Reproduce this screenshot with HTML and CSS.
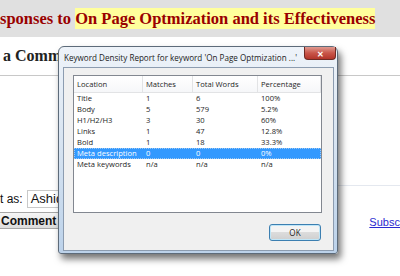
FILE: index.html
```html
<!DOCTYPE html>
<html lang="en">
<head>
    <meta charset="UTF-8">
    <title>Keyword Density Report</title>
    <link rel="stylesheet" href="styles.css">
</head>
<body>

    <div class="band">
        <h2 class="post-title">sponses to <span class="mark">On Page Optmization and its Effectiveness</span></h2>
    </div>

    <div class="comment-head">
        <h3>a Comm</h3>
    </div>

    <div class="rule"></div>

    <div class="comment-as">
        <span>t as:</span>
        <span class="identity">Ashique</span>
    </div>

    <div class="comment-actions">
        <button class="btn-comment">Comment</button>
        <a href="#" class="subscribe">Subscribe</a>
    </div>

    <!-- popup report window, sits over the page -->
    <div class="dialog">
        <div class="titlebar">
            <span class="caption">Keyword Density Report for keyword 'On Page Optmization ...'</span>
            <span class="close">&#x2715;</span>
        </div>
        <div class="client">
            <div class="listview">
                <div class="row head">
                    <span>Location</span><span>Matches</span><span>Total Words</span><span>Percentage</span>
                </div>
                <div class="row"><span>Title</span><span>1</span><span>6</span><span>100%</span></div>
                <div class="row"><span>Body</span><span>5</span><span>579</span><span>5.2%</span></div>
                <div class="row"><span>H1/H2/H3</span><span>3</span><span>30</span><span>60%</span></div>
                <div class="row"><span>Links</span><span>1</span><span>47</span><span>12.8%</span></div>
                <div class="row"><span>Bold</span><span>1</span><span>18</span><span>33.3%</span></div>
                <div class="row selected"><span>Meta description</span><span>0</span><span>0</span><span>0%</span></div>
                <div class="row"><span>Meta keywords</span><span>n/a</span><span>n/a</span><span>n/a</span></div>
            </div>
            <div class="footer">
                <button class="btn-ok">OK</button>
            </div>
        </div>
    </div>

</body>
</html>
```

FILE: styles.css
```css
body {
    margin: 0;
    width: 400px;
    height: 276px;
    overflow: hidden;
    background: #ffffff;
    font-family: "Liberation Sans", Arial, sans-serif;
    position: relative;
}

/* --- Page behind the popup --- */
.band {
    height: 37px;
    background: #e0e0e0;
    display: flex;
    align-items: center;
}

.post-title {
    margin: 0;
    font-family: "Liberation Serif", serif;
    font-size: 16.5px;
    font-weight: bold;
    color: #990000;
    white-space: nowrap;
}

.mark {
    background: #ffff9c;
    padding: 1px 0;
}

.comment-head {
    height: 38px;
    border-bottom: 1px solid #c8c8c8;
    display: flex;
    align-items: center;
}

.comment-head h3 {
    margin: 0 0 0 3px;
    font-family: "Liberation Serif", serif;
    font-size: 16px;
    font-weight: bold;
    color: #222;
}

.rule {
    margin: 109px 0 0 200px;
    border-top: 1px solid #e4e8ef;
}

.comment-as {
    margin-top: 4px;
    display: flex;
    align-items: center;
    gap: 4px;
    font-size: 12px;
    color: #111;
}

.identity {
    border: 1px solid #c9c9c9;
    padding: 1px 3px;
    height: 14px;
    line-height: 14px;
    font-size: 13px;
    width: 40px;
}

.comment-actions {
    margin-top: 4px;
    display: flex;
    align-items: center;
}

.btn-comment {
    margin-left: -6px;
    height: 17px;
    padding: 0 5px 0 6px;
    font-family: "Liberation Sans", Arial, sans-serif;
    font-size: 12px;
    font-weight: bold;
    color: #111;
    border: 1px solid #a6a6a6;
    border-radius: 2px;
    background: linear-gradient(#f6f6f6, #dcdcdc);
}

.subscribe {
    margin-left: 307px;
    margin-top: 3px;
    font-size: 11px;
    color: #2a2ad0;
    white-space: nowrap;
}

/* --- Report window --- */
.dialog {
    position: absolute;
    left: 58px;
    top: 46px;
    width: 280px;
    height: 208px;
    box-sizing: border-box;
    padding: 0 3px 2px 4px;
    border: 1px solid #5d6b7a;
    border-radius: 6px 6px 3px 3px;
    background: linear-gradient(#eef3f9, #dbe6f2 40%, #bcd2ea);
    box-shadow: 3px 5px 7px rgba(0, 0, 0, 0.55);
    display: flex;
    flex-direction: column;
    font-family: "Open Sans", "Noto Sans", sans-serif;
    color: #1e1e1e;
}

.titlebar {
    height: 20px;
    display: flex;
    align-items: center;
    position: relative;
}

.caption {
    margin-left: 1px;
    font-size: 8.1px;
    color: #222;
    white-space: nowrap;
}

.close {
    position: absolute;
    right: -2px;
    top: 0;
    width: 32px;
    height: 13px;
    box-sizing: border-box;
    border: 1px solid #6e2a24;
    border-top: none;
    border-radius: 0 0 4px 4px;
    background: linear-gradient(#e09a90, #c9564a 50%, #b3352a);
    color: #fff;
    font-size: 8px;
    font-weight: bold;
    display: flex;
    align-items: center;
    justify-content: center;
}

.client {
    flex: 1;
    background: #f0f0f0;
    border: 1px solid #8c9cb0;
    padding: 7px 11px 9px 9px;
    display: flex;
    flex-direction: column;
}

.listview {
    flex: 1;
    background: #fff;
    border: 1px solid #828790;
}

.row {
    display: grid;
    grid-template-columns: 69px 50px 65px 1fr;
    height: 11px;
    line-height: 11px;
    font-size: 7.6px;
    white-space: nowrap;
}

.row span {
    padding-left: 3px;
    overflow: hidden;
}

.row.head {
    height: 16px;
    line-height: 16px;
    background: linear-gradient(#ffffff, #f6f7f9);
    border-bottom: 1px solid #e2e3e5;
}

.row.head span {
    border-right: 1px solid #e2e3e5;
}

.row.selected {
    background: #3399ff;
    color: #fff;
    outline: 1px dotted #a0c8f0;
    outline-offset: -1px;
}

.footer {
    display: flex;
    justify-content: flex-end;
    margin-top: 11px;
}

.btn-ok {
    width: 52px;
    height: 17px;
    margin-right: 1px;
    font-family: "Open Sans", "Noto Sans", sans-serif;
    font-size: 8.1px;
    color: #222;
    border: 1px solid #3c7fb1;
    border-radius: 3px;
    background: linear-gradient(#f4f4f4 45%, #dcdcdc 50%, #cfcfcf);
    box-shadow: inset 0 0 0 1px #bfe6f8;
    padding: 0;
}
```
